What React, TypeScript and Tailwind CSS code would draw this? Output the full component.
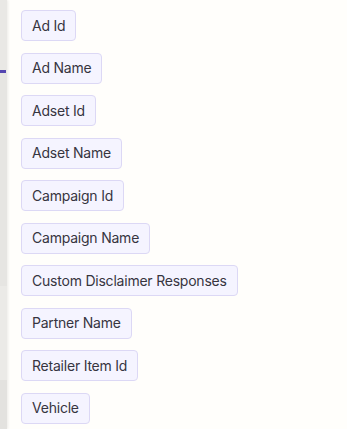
const fields = [
  "Ad Id",
  "Ad Name",
  "Adset Id",
  "Adset Name",
  "Campaign Id",
  "Campaign Name",
  "Custom Disclaimer Responses",
  "Partner Name",
  "Retailer Item Id",
  "Vehicle",
]

export default function App() {
  return (
    <div className="flex h-[429px] w-[347px] overflow-hidden bg-[#fffefb] font-['Inter',sans-serif]">
      {/* page behind the drawer */}
      <div className="flex w-[7px] shrink-0 flex-col bg-[#e9e8e5] shadow-[1px_0_3px_rgba(0,0,0,0.08)]">
        <div className="h-[70px]" />
        <div className="h-[3px] w-[6px] bg-[#5446b0]" />
        <div className="h-[213px] bg-[#e6e5e2]" />
        <div className="h-[94px] bg-[#ebeae7]" />
        <div className="flex-1 bg-[#e3e2df]" />
      </div>

      <div className="flex flex-col items-start gap-[11.55px] pl-[14px] pt-[10px]">
        {fields.map((f) => (
          <div
            key={f}
            className="flex h-[31px] items-center rounded-[4px] border border-[#dcd8f5] bg-[#f5f4ff] px-[10px] text-[14px] leading-5 tracking-[-0.22px] text-[#37353f]"
          >
            {f}
          </div>
        ))}
      </div>
    </div>
  )
}
